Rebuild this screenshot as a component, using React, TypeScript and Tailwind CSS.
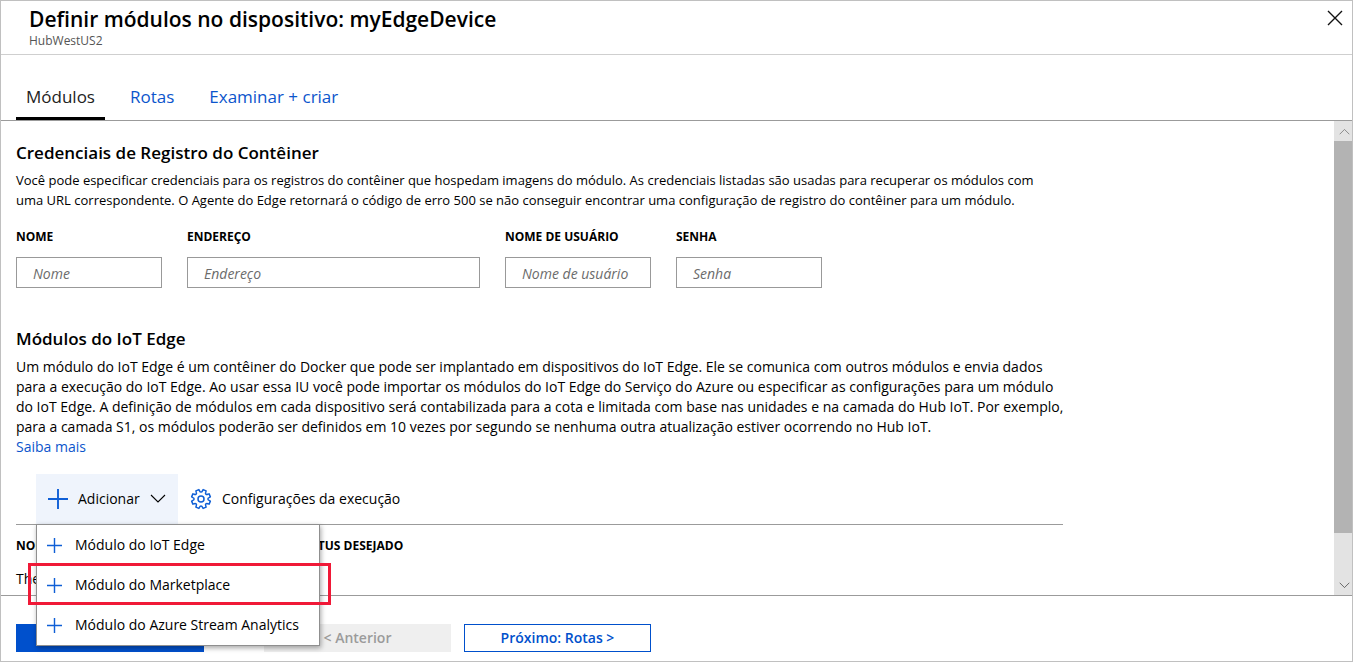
import React from "react";

const tabs = [
  { label: "Módulos", active: true },
  { label: "Rotas", active: false },
  { label: "Examinar + criar", active: false },
];

const fields = [
  { id: "nome", label: "NOME", placeholder: "Nome", width: "w-[146px]" },
  { id: "endereco", label: "ENDEREÇO", placeholder: "Endereço", width: "w-[293px]" },
  { id: "usuario", label: "NOME DE USUÁRIO", placeholder: "Nome de usuário", width: "w-[146px]" },
  { id: "senha", label: "SENHA", placeholder: "Senha", width: "w-[146px]" },
];

const menuItems = [
  { label: "Módulo do IoT Edge", highlighted: false },
  { label: "Módulo do Marketplace", highlighted: true },
  { label: "Módulo do Azure Stream Analytics", highlighted: false },
];

function Plus({ className }: { className: string }) {
  return (
    <svg viewBox="0 0 20 20" className={className} fill="none" stroke="#0f5fd6" aria-hidden="true">
      <path d="M10 0v20M0 10h20" strokeWidth="1.9" />
    </svg>
  );
}

function Chevron({ className, up = false }: { className: string; up?: boolean }) {
  return (
    <svg viewBox="0 0 16 10" className={className} fill="none" stroke="currentColor" strokeWidth="1.1" aria-hidden="true">
      <path d={up ? "M1 9L8 2L15 9" : "M1 1L8 8L15 1"} />
    </svg>
  );
}

// Eight flat teeth joined by rounded valleys.
function gearPath() {
  const teeth = 8;
  const at = (angle: number, radius: number) =>
    `${(11 + radius * Math.cos(angle)).toFixed(2)} ${(11 + radius * Math.sin(angle)).toFixed(2)}`;
  let d = "";
  for (let i = 0; i < teeth; i++) {
    const base = ((i + 0.5) * 2 * Math.PI) / teeth;
    const next = base + (2 * Math.PI) / teeth;
    d += `${i === 0 ? "M" : "L"}${at(base - 0.17, 9.6)}L${at(base + 0.17, 9.6)}`;
    d += `L${at(base + 0.22, 8.2)}C${at(base + 0.26, 6.6)} ${at(next - 0.26, 6.6)} ${at(next - 0.22, 8.2)}`;
  }
  return `${d}Z`;
}

function Gear() {
  return (
    <svg viewBox="0 0 22 22" className="size-[22px]" fill="none" stroke="#0f5fd6" strokeWidth="1.5" strokeLinejoin="round" aria-hidden="true">
      <path d={gearPath()} />
      <circle cx="11" cy="11" r="3" />
    </svg>
  );
}

function AddMenu() {
  return (
    <div className="relative">
      <button type="button" aria-haspopup="menu" aria-expanded="true" className="flex h-[50px] w-[142px] items-center bg-[#eff4fc] pl-3">
        <Plus className="size-5" />
        <span className="ml-2.5">Adicionar</span>
        <Chevron className="ml-2.5 h-2.5 w-4" />
      </button>
      <ul role="menu" className="absolute left-0 top-full z-10 w-[284px] border border-[#8f8f8f] bg-white shadow-[1px_2px_5px_rgba(0,0,0,0.35)]">
        {menuItems.map((item) => (
          <li key={item.label} role="none" className="relative">
            <button type="button" role="menuitem" className="flex h-10 w-full items-center gap-[13px] whitespace-nowrap pl-2.5">
              <Plus className="size-[15px]" />
              {item.label}
            </button>
            {item.highlighted && (
              <span className="pointer-events-none absolute -left-[9px] -right-3 -top-0.5 bottom-0 border-3 border-[#f01937]" />
            )}
          </li>
        ))}
      </ul>
    </div>
  );
}

function ScrollRail() {
  return (
    <div className="flex w-[18px] shrink-0 flex-col bg-[#e3e3e3]" aria-hidden="true">
      <div className="flex h-5 items-center justify-center pl-0.5 text-[#707070]">
        <Chevron up className="h-[7px] w-[11px]" />
      </div>
      <div className="flex-1 bg-[#b3b3b3]" />
      <div className="h-[42px]" />
      <div className="flex h-5 items-center justify-center pl-0.5 text-[#404040]">
        <Chevron className="h-[7px] w-[11px]" />
      </div>
    </div>
  );
}

export default function App() {
  return (
    <div className="flex min-h-screen flex-col border border-[#c0c0c0] bg-white font-['Open_Sans','Noto_Sans',sans-serif] text-sm leading-5 text-black">
      <header className="flex items-start justify-between border-b border-[#cfcfcf] pb-[5px] pl-7 pr-[9px]">
        <div>
          <h1 className="pt-1 text-[21px] font-semibold leading-7">Definir módulos no dispositivo: myEdgeDevice</h1>
          <p className="text-xs leading-4 text-[#555]">HubWestUS2</p>
        </div>
        <button type="button" aria-label="Fechar" className="mt-[9px]">
          <svg viewBox="0 0 16 16" className="size-4" fill="none" stroke="#111" strokeWidth="1.4" aria-hidden="true">
            <path d="M1 1l14 14M15 1L1 15" />
          </svg>
        </button>
      </header>

      <nav className="flex gap-[15px] border-b border-[#9b9b9b] pl-[15px] pt-6 text-[17px] leading-9">
        {tabs.map((tab) => (
          <a
            key={tab.label}
            href="#"
            aria-current={tab.active ? "page" : undefined}
            className={
              tab.active
                ? "border-b-3 border-black px-2.5 pb-0.5 text-[#222]"
                : "border-b-3 border-transparent px-2.5 pb-0.5 text-[#0b55cc]"
            }
          >
            {tab.label}
          </a>
        ))}
      </nav>

      <div className="flex flex-1 border-b border-[#9b9b9b]">
        <main className="flex-1 pl-[15px] pt-5">
          <section>
            <h2 className="text-[17px] font-semibold leading-6">Credenciais de Registro do Contêiner</h2>
            <p className="mt-[5px] max-w-[1050px] text-[13px]">
              Você pode especificar credenciais para os registros do contêiner que hospedam imagens do módulo. As credenciais listadas são usadas para recuperar os módulos com
              <br />
              uma URL correspondente. O Agente do Edge retornará o código de erro 500 se não conseguir encontrar uma configuração de registro do contêiner para um módulo.
            </p>
            <form className="mt-[17px] flex gap-[25px]">
              {fields.map((field) => (
                <div key={field.id} className={field.width}>
                  <label htmlFor={field.id} className="block whitespace-nowrap text-xs font-bold leading-5">
                    {field.label}
                  </label>
                  <input
                    id={field.id}
                    type={field.id === "senha" ? "password" : "text"}
                    placeholder={field.placeholder}
                    className="mt-2.5 h-[31px] w-full border border-[#999] pl-4 pt-0.5 italic placeholder:text-[#6b6b6b]"
                  />
                </div>
              ))}
            </form>
          </section>

          <section className="mt-[39px]">
            <h2 className="text-[17px] font-semibold leading-6">Módulos do IoT Edge</h2>
            <p className="mt-1.5 max-w-[1050px]">
              Um módulo do IoT Edge é um contêiner do Docker que pode ser implantado em dispositivos do IoT Edge. Ele se comunica com outros módulos e envia dados para a execução do IoT Edge. Ao usar essa IU você pode importar os módulos do IoT Edge do Serviço do Azure ou especificar as configurações para um módulo do IoT Edge. A definição de módulos em cada dispositivo será contabilizada para a cota e limitada com base nas unidades e na camada do Hub IoT. Por exemplo, para a camada S1, os módulos poderão ser definidos em 10 vezes por segundo se nenhuma outra atualização estiver ocorrendo no Hub IoT.
            </p>
            <a href="#" className="text-[#0b55cc]">Saiba mais</a>

            <div className="max-w-[1047px]">
              <div className="mt-[17px] flex border-b border-[#9b9b9b] pl-5">
                <AddMenu />
                <button type="button" className="flex items-center gap-2.5 pl-3">
                  <Gear />
                  Configurações da execução
                </button>
              </div>
              <table className="w-full table-fixed text-left">
                <thead>
                  <tr className="h-[42px] text-xs">
                    <th className="w-[280px] font-bold">NOME</th>
                    <th className="font-bold">STATUS DESEJADO</th>
                  </tr>
                </thead>
                <tbody>
                  <tr>
                    <td colSpan={2} className="pt-0.5">There are no listed modules.</td>
                  </tr>
                </tbody>
              </table>
            </div>
          </section>
        </main>
        <ScrollRail />
      </div>

      <footer className="flex px-[15px] pb-[9px] pt-7 font-semibold">
        <button type="button" className="h-7 w-[188px] bg-[#0050cc] text-white">Examinar + criar</button>
        <button type="button" disabled className="ml-[60px] h-7 w-[187px] bg-[#efefef] text-[#9b9b9b]">&lt; Anterior</button>
        <button type="button" className="ml-[13px] h-7 w-[187px] border border-[#0050cc] text-[#0050cc]">Próximo: Rotas &gt;</button>
      </footer>
    </div>
  );
}
